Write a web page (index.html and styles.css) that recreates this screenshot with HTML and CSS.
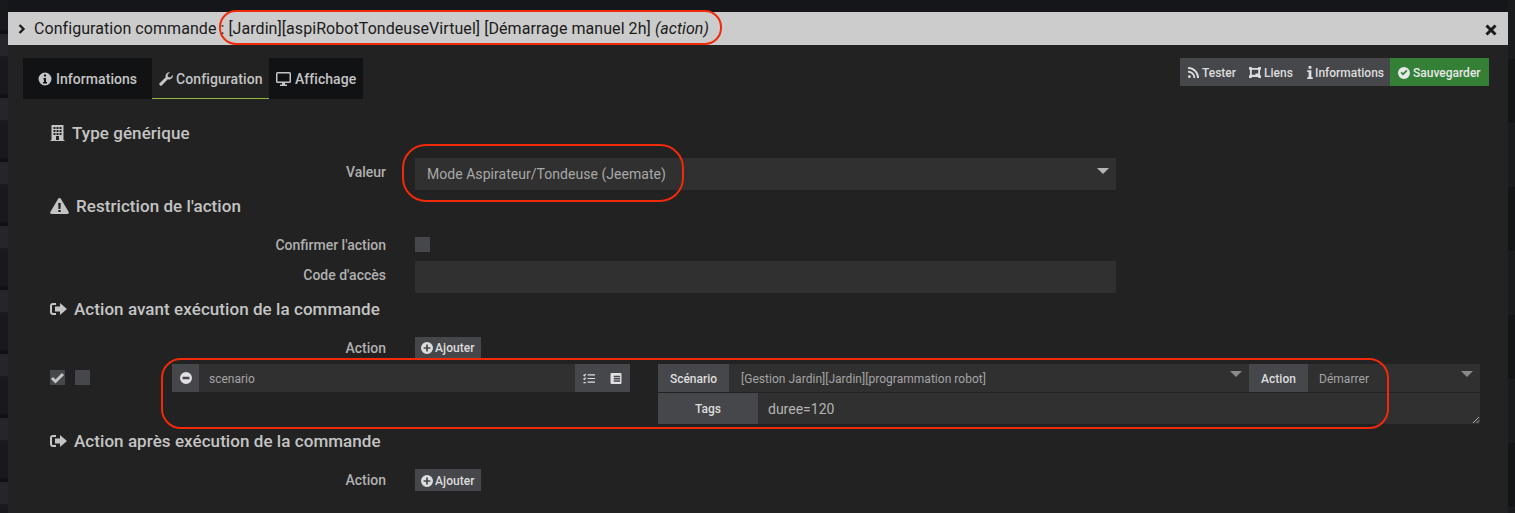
FILE: index.html
```html
<!DOCTYPE html>
<html lang="fr">
<head>
<meta charset="utf-8">
<title>Configuration commande</title>
<link rel="stylesheet" href="styles.css">
</head>
<body>
<svg class="sprite" width="0" height="0" aria-hidden="true">
  <symbol id="arrow" viewBox="0 0 17 14"><path fill="currentColor" d="M6 1v2H3Q2 3 2 4v6q0 1 1 1h3v2H3Q0 13 0 10V4Q0 1 3 1zM10 1l7 6-7 6V9.500H5v-5h5z"/></symbol>
  <symbol id="plus" viewBox="0 0 14 14"><path fill="currentColor" fill-rule="evenodd" d="M7 0a7 7 0 1 0 0 14A7 7 0 0 0 7 0zM6 3h2v3h3v2H8v3H6V8H3V6h3z"/></symbol>
</svg>
<div class="modal">
  <div class="titlebar">
    <svg class="chev" viewBox="0 0 8 10"><path d="M1.500 1l4 4-4 4" fill="none" stroke="currentColor" stroke-width="2.300"/></svg>
    <span class="title-text">Configuration commande : [Jardin][aspiRobotTondeuseVirtuel] [Démarrage manuel 2h] <em>(action)</em></span>
    <svg class="close" viewBox="0 0 12 12"><path d="M1.500 1.500l9 9m0-9l-9 9" fill="none" stroke="currentColor" stroke-width="3"/></svg>
  </div>
  <div class="content">
    <div class="topbar">
      <div class="tabs">
        <div class="tab tab-info">
          <svg class="ic14" viewBox="0 0 14 14"><path fill="currentColor" fill-rule="evenodd" d="M7 .5a6.500 6.500 0 1 0 0 13 6.500 6.500 0 0 0 0-13zM6 2.500h2v2H6zM5.500 6H8v4h1v1.500H5V10h1V7.500h-.5z"/></svg>
          Informations
        </div>
        <div class="tab tab-conf">
          <svg class="ic14" viewBox="0 0 14 14"><path fill="currentColor" d="M14 3.500a4 4 0 0 1-5.200 3.800L3 13.200a1.500 1.500 0 0 1-2.200-2.200l5.900-5.800A4 4 0 0 1 11 .2L8.500 2.700l.5 2.300 2.300.5L13.800 3z"/></svg>
          Configuration
        </div>
        <div class="tab tab-aff">
          <svg class="ic15" viewBox="0 0 15 14"><path fill="currentColor" fill-rule="evenodd" d="M1.500 0h12Q15 0 15 1.500v8Q15 11 13.500 11H9v1.500h2V14H4v-1.500h2V11H1.500Q0 11 0 9.500v-8Q0 0 1.500 0zM1.500 1.500v8h12v-8z"/></svg>
          Affichage
        </div>
      </div>
      <div class="actions">
        <span class="act act-test">
          <svg class="ic11" viewBox="0 0 12 12"><path fill="currentColor" d="M0 0a12 12 0 0 1 12 12h-2A10 10 0 0 0 0 2zm0 4a8 8 0 0 1 8 8H6a6 6 0 0 0-6-6zm1.500 5a1.500 1.500 0 1 1 0 3 1.500 1.500 0 0 1 0-3z"/></svg>
          Tester
        </span>
        <span class="act act-liens">
          <svg class="ic12" viewBox="0 0 13 12"><path fill="currentColor" fill-rule="evenodd" d="M0 0h3v1h7V0h3v3h-1v6h1v3h-3v-1H3v1H0V9h1V3H0zM3 3v5.500h4V7h3V3z"/></svg>
          Liens
        </span>
        <span class="act act-inf">
          <svg class="ic-i" viewBox="0 0 6 14"><path fill="currentColor" d="M1.500 0h3v3h-3zM0 4.500h4.500V12H6v2H0v-2h1.500V6.500H0z"/></svg>
          Informations
        </span>
        <span class="act act-save">
          <svg class="ic12r" viewBox="0 0 12 12"><path fill="currentColor" fill-rule="evenodd" d="M6 0a6 6 0 1 0 0 12A6 6 0 0 0 6 0zM2.500 6l1.200-1.200L5 6.100l3.300-3.300L9.500 4 5 8.500z"/></svg>
          Sauvegarder
        </span>
      </div>
    </div>

    <h3 class="heading h-type">
      <svg class="h-ic-b" viewBox="0 0 14 16"><path fill="currentColor" fill-rule="evenodd" d="M1 0h12v15h1v1H0v-1h1zM3 2v2h2V2zm3 0v2h2V2zm3 0v2h2V2zM3 5v2h2V5zm3 0v2h2V5zm3 0v2h2V5zM3 8v2h2V8zm3 0v2h2V8zm3 0v2h2V8zM5.500 11v4h3v-4z"/></svg>
      Type générique
    </h3>
    <div class="field f-valeur">
      <label class="lab">Valeur</label>
      <div class="select big-select">Mode Aspirateur/Tondeuse (Jeemate)<i class="caret"></i></div>
    </div>
    <h3 class="heading h-restr">
      <svg class="h-ic-w" viewBox="0 0 19 16"><path fill="currentColor" fill-rule="evenodd" d="M9.500 0q1 0 1.500 1l7.700 13q.6 1.700-1.200 2h-16Q-.300 15.700.300 14L8 1q.5-1 1.500-1zM8.200 5l.3 6h2l.3-6zM8.300 12v2h2.400v-2z"/></svg>
      Restriction de l'action
    </h3>
    <div class="field f-confirm">
      <label class="lab">Confirmer l'action</label>
      <span class="check"></span>
    </div>
    <div class="field f-code">
      <label class="lab">Code d'accès</label>
      <div class="input"></div>
    </div>
    <h3 class="heading h-avant">
      <svg class="h-ic-a" viewBox="0 0 17 14"><use href="#arrow"/></svg>
      Action avant exécution de la commande
    </h3>
    <div class="field f-add1">
      <label class="lab">Action</label>
      <span class="add"><svg class="ic12r" viewBox="0 0 14 14"><use href="#plus"/></svg> Ajouter</span>
    </div>
    <div class="action-row">
      <div class="checks">
        <span class="check check-on"><svg viewBox="0 0 15 15"><path d="M2 8l3.500 3.500L13 4" fill="none" stroke="#c4c4c4" stroke-width="3"/></svg></span>
        <span class="check"></span>
      </div>
      <div class="cmd-group">
        <span class="g-btn g-minus"><svg class="ic12r" viewBox="0 0 14 14"><path fill="currentColor" fill-rule="evenodd" d="M7 0a7 7 0 1 0 0 14A7 7 0 0 0 7 0zM3 5.500h8v3H3z"/></svg></span>
        <span class="g-input">scenario</span>
        <span class="g-btn g-list">
          <svg class="ic12" viewBox="0 0 13 12"><path fill="none" stroke="currentColor" stroke-width="1.300" d="M5 2h8M5 6h8M5 10h8M.5 2l1 1 1.500-2M.5 6l1 1 1.500-2M.5 10.500h2.500"/></svg>
        </span>
        <span class="g-btn g-tbl">
          <svg class="ic12" viewBox="0 0 12 12"><path fill="currentColor" fill-rule="evenodd" d="M1 0h10q1 0 1 1v10q0 1-1 1H1q-1 0-1-1V1q0-1 1-1zM3.500 3v1.500h7V3zm0 2.500V7h7V5.500zm0 2.500v1.500h7V8z"/></svg>
        </span>
      </div>
      <div class="opts">
        <div class="opt-line">
          <span class="addon a-scen">Scénario</span>
          <span class="opt-sel s-scen">[Gestion Jardin][Jardin][programmation robot]<i class="caret"></i></span>
          <span class="addon a-act">Action</span>
          <span class="opt-sel s-act">Démarrer<i class="caret"></i></span>
        </div>
        <div class="opt-line l-tags">
          <span class="addon a-tags">Tags</span>
          <span class="tags">duree=120
            <svg class="grip" viewBox="0 0 8 8"><path d="M1 7l6-6M4.500 7L7 4.500" stroke="#b5b5b5" stroke-width="1" fill="none"/></svg>
          </span>
        </div>
      </div>
    </div>
    <h3 class="heading h-apres">
      <svg class="h-ic-a" viewBox="0 0 17 14"><use href="#arrow"/></svg>
      Action après exécution de la commande
    </h3>
    <div class="field f-add2">
      <label class="lab">Action</label>
      <span class="add"><svg class="ic12r" viewBox="0 0 14 14"><use href="#plus"/></svg> Ajouter</span>
    </div>
  </div>
</div>
<div class="oval o-title"></div>
<div class="oval o-val"></div>
<div class="oval o-row"></div>
</body>
</html>
```

FILE: styles.css
```css
* { box-sizing: border-box; }
html, body { margin: 0; height: 513px; overflow: hidden; }
body {
  background-color: #141619;
  background-image:
    repeating-linear-gradient(180deg, #25262a 34px, #25262a 56px, #1a1b1e 56px, #1a1b1e 61px, #17191c 61px, #17191c 94px, #111214 94px, #111214 98px),
    repeating-linear-gradient(180deg, #131518 59px, #131518 123px, #1a1b1d 123px, #1a1b1d 187px);
  background-size: 8px 100%, 7px 100%;
  background-position: left top, right top;
  background-repeat: no-repeat;
  font-family: Roboto, "Liberation Sans", sans-serif;
  color: #c8c8c8;
  position: relative;
  padding: 12px 7px 0 8px;
}
.sprite { position: absolute; }
.modal { background: #222222; height: 501px; display: flex; flex-direction: column; }
.titlebar {
  height: 33px;
  background: #cccccc;
  color: #1b1b1b;
  display: flex;
  align-items: center;
  padding: 0 11px 0 10px;
  font-size: 16px;
}
.chev { width: 8px; height: 10px; margin-right: 8px; }
.title-text { flex: 1; white-space: nowrap; letter-spacing: .06px; }
.close { width: 12px; height: 12px; margin-top: 2px; }
.content { padding: 13px 19px 0 15px; flex: 1; }
.topbar { display: flex; justify-content: space-between; align-items: flex-start; height: 41px; }
.tabs { display: flex; height: 41px; }
.tab {
  display: flex;
  align-items: center;
  font-size: 14px;
  font-weight: 500;
  background: #111214;
  color: #c4c4c4;
  height: 41px;
  white-space: nowrap;
  letter-spacing: .05px;
}
.tab-info { width: 129px; padding-left: 15px; gap: 4px; }
.tab-conf { width: 117px; padding-left: 7px; padding-top: 1px; gap: 3px; background: #222222; border-bottom: 1px solid #95b53c; letter-spacing: .1px; }
.tab-aff { width: 94px; padding-left: 7px; gap: 4px; }
.ic14 { width: 14px; height: 14px; flex: none; }
.ic15 { width: 15px; height: 14px; flex: none; }
.ic11 { width: 11px; height: 11px; flex: none; }
.ic12r { width: 12px; height: 12px; flex: none; }
.ic12 { width: 12px; height: 11px; flex: none; }
.ic-i { width: 6px; height: 13px; flex: none; }
.actions { display: flex; height: 28px; font-size: 12px; font-weight: 500; color: #dddddd; background: #46474a; }
.act { display: flex; align-items: center; gap: 3px; white-space: nowrap; padding-top: 1px; }
.act-test { padding-left: 8px; width: 62px; }
.act-liens { padding-left: 7px; width: 58px; }
.act-inf { padding-left: 7px; gap: 2px; width: 90px; }
.act-save { width: 99px; padding-left: 8px; background: #348037; color: #e8e8e8; gap: 3px; }
.heading {
  margin: 0;
  font-size: 17px;
  font-weight: 500;
  color: #c4c4c4;
  display: flex;
  align-items: center;
  height: 20px;
  padding-left: 27px;
  white-space: nowrap;
  letter-spacing: .06px;
}
.h-type { margin-top: 24px; gap: 7px; }
.h-ic-b { width: 15px; height: 16px; }
.h-ic-w { width: 19px; height: 16px; }
.h-ic-a { width: 17px; height: 14px; }
.h-restr { margin-top: 6px; gap: 7px; }
.h-avant { margin-top: 6px; gap: 7px; }
.h-apres { margin-top: 7px; gap: 7px; }
.field { display: flex; align-items: center; }
.lab {
  width: 363px;
  text-align: right;
  margin-right: 29px;
  font-size: 14px;
  font-weight: 500;
  color: #b0b0b0;
}
.f-valeur { margin-top: 15px; height: 32px; }
.f-valeur .lab { margin-top: -4px; }
.select, .input { width: 701px; height: 32px; background: #303030; }
.select { position: relative; display: flex; align-items: center; padding-left: 12px; font-size: 14px; color: #a8a8a8; letter-spacing: .04px; }
.caret { position: absolute; width: 0; height: 0; border-left: 6px solid transparent; border-right: 6px solid transparent; border-top: 6px solid #b5b5b5; top: 10px; right: 7px; }
.f-confirm { margin-top: 21px; height: 15px; }
.check { display: block; width: 15px; height: 15px; background: #46474a; flex: none; }
.check svg { display: block; width: 15px; height: 15px; }
.f-code { margin-top: 9px; height: 32px; }
.f-code .lab { margin-top: -4px; }
.f-add1 { margin-top: 18px; height: 21px; }
.f-add1 .lab { padding-top: 1px; }
.f-add2 { margin-top: 18px; height: 22px; }
.add { display: flex; align-items: center; gap: 2px; width: 66px; height: 100%; padding-left: 6px; padding-top: 1px; background: #46474a; font-size: 12px; font-weight: 500; color: #dddddd; letter-spacing: .08px; }
.action-row { display: flex; height: 60px; margin-top: 6px; padding-left: 27px; position: relative; }
.checks { display: flex; gap: 10px; width: 122px; padding-top: 6px; align-items: flex-start; }
.cmd-group { display: flex; width: 458px; height: 28px; margin-right: 28px; }
.g-btn { display: flex; align-items: center; justify-content: center; background: #46474a; color: #e0e0e0; height: 28px; flex: none; }
.g-minus { width: 27px; }
.g-list { width: 27px; }
.g-tbl { width: 28px; }
.g-input { flex: 1; background: #303030; display: flex; align-items: center; padding-left: 10px; padding-top: 1px; font-size: 12px; color: #a4a4a4; }
.opts { width: 822px; display: flex; flex-direction: column; gap: 1px; }
.opt-line { display: flex; height: 28px; font-size: 12px; }
.l-tags { height: 31px; }
.addon { display: flex; align-items: center; justify-content: center; background: #46474a; color: #dddddd; font-weight: 500; flex: none; padding-top: 1px; }
.a-scen { width: 71px; }
.a-act { width: 59px; }
.a-tags { width: 100px; }
.opt-sel { position: relative; display: flex; align-items: center; background: #303030; color: #a4a4a4; padding-left: 12px; padding-top: 1px; letter-spacing: .03px; }
.opt-sel .caret { top: 7px; right: 7px; border-top-color: #8a8a8a; }
.s-scen { width: 520px; }
.s-act { width: 172px; padding-left: 11px; }
.tags { flex: 1; position: relative; display: flex; align-items: center; background: #303030; color: #b4b4b4; font-size: 14px; padding-left: 10px; }
.grip { position: absolute; width: 8px; height: 8px; right: 0; bottom: 0; }
.oval { position: absolute; border: 2px solid #f02a0a; }
.o-title { left: 219px; top: 10px; width: 503px; height: 35px; border-radius: 17px; }
.o-val { left: 402px; top: 144px; width: 282px; height: 58px; border-radius: 24px; }
.o-row { left: 161px; top: 358px; width: 1228px; height: 71px; border-radius: 20px; }
```
